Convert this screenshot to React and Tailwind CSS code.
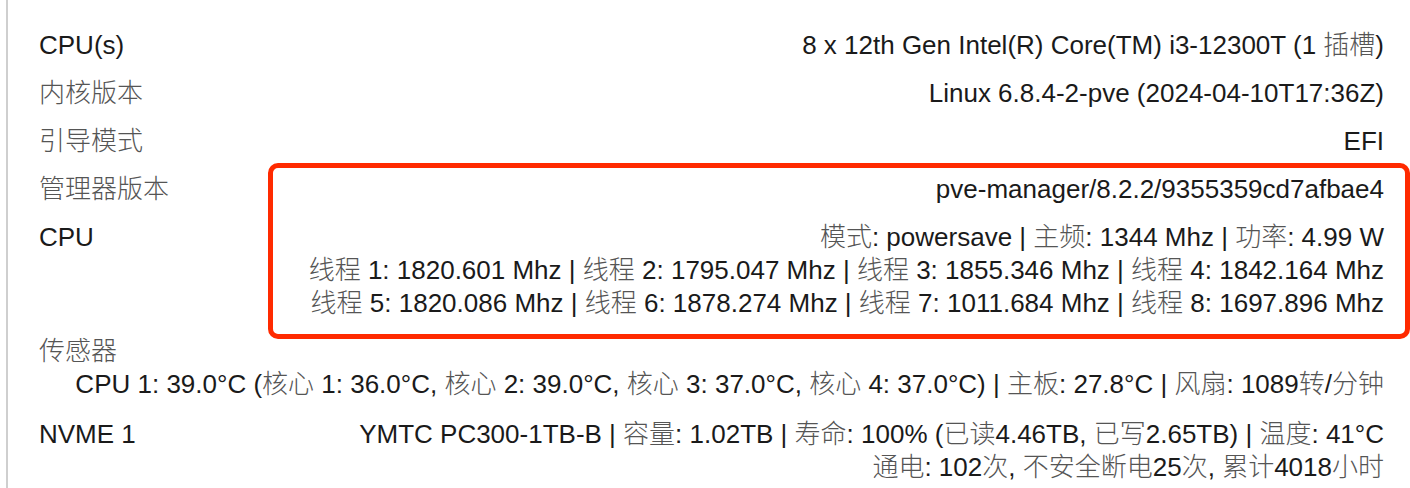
import React from "react";

const CJK = /([\u3000-\u9fff\uff00-\uffef]+)/;
const IS_CJK = /^[\u3000-\u9fff\uff00-\uffef]+$/;

function T({ s }) {
  return (
    <>
      {s.split(CJK).map((p, i) =>
        IS_CJK.test(p) ? (
          <span key={i} className="text-[#555] font-light">
            {p}
          </span>
        ) : (
          <React.Fragment key={i}>{p}</React.Fragment>
        )
      )}
    </>
  );
}

function Row({ label, lines }) {
  return (
    <div className="flex justify-between py-[7.5px]">
      <div className="whitespace-nowrap">
        <T s={label} />
      </div>
      <div className="flex flex-col items-end text-right">
        {lines.map((l, i) => (
          <div key={i} className="whitespace-nowrap">
            <T s={l} />
          </div>
        ))}
      </div>
    </div>
  );
}

export default function App() {
  return (
    <div
      className="relative w-[1410px] h-[488px] overflow-hidden bg-white text-[26px] leading-[33px] text-[#1a1a1a]"
      style={{ fontFamily: '"Liberation Sans", "Noto Sans CJK SC", sans-serif' }}
    >
      <div className="ml-[6px] h-full border-l-2 border-[#cfcfcf] pl-[31px] pr-[26px] pt-[21px]">
        <Row label="CPU(s)" lines={["8 x 12th Gen Intel(R) Core(TM) i3-12300T (1 插槽)"]} />
        <Row label="内核版本" lines={["Linux 6.8.4-2-pve (2024-04-10T17:36Z)"]} />
        <Row label="引导模式" lines={["EFI"]} />
        <Row label="管理器版本" lines={["pve-manager/8.2.2/9355359cd7afbae4"]} />
        <Row
          label="CPU"
          lines={[
            "模式: powersave | 主频: 1344 Mhz | 功率: 4.99 W",
            "线程 1: 1820.601 Mhz | 线程 2: 1795.047 Mhz | 线程 3: 1855.346 Mhz | 线程 4: 1842.164 Mhz",
            "线程 5: 1820.086 Mhz | 线程 6: 1878.274 Mhz | 线程 7: 1011.684 Mhz | 线程 8: 1697.896 Mhz",
          ]}
        />
        <div className="pt-[8px] pb-[7px]">
          <div>
            <T s="传感器" />
          </div>
          <div className="text-right whitespace-nowrap">
            <T s="CPU 1: 39.0°C (核心 1: 36.0°C, 核心 2: 39.0°C, 核心 3: 37.0°C, 核心 4: 37.0°C) | 主板: 27.8°C | 风扇: 1089转/分钟" />
          </div>
        </div>
        <div className="pt-[2px]">
          <Row
            label="NVME 1"
            lines={[
              "YMTC PC300-1TB-B | 容量: 1.02TB | 寿命: 100% (已读4.46TB, 已写2.65TB) | 温度: 41°C",
              "通电: 102次, 不安全断电25次, 累计4018小时",
            ]}
          />
        </div>
      </div>
      <div className="pointer-events-none absolute left-[268px] top-[163px] w-[1142px] h-[176px] rounded-[10px] border-[5px] border-[#ff2a00]" />
    </div>
  );
}
